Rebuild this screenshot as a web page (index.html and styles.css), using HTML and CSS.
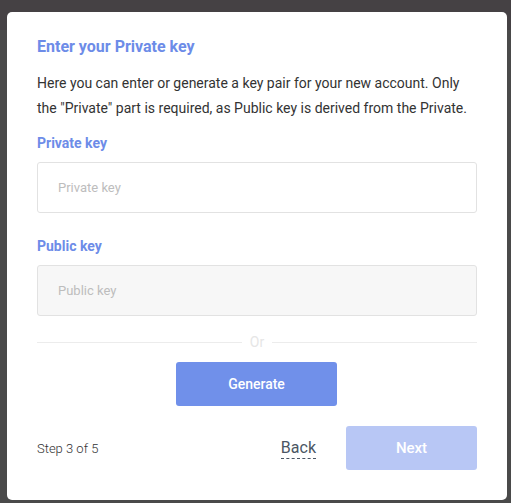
FILE: index.html
```html
<!DOCTYPE html>
<html>
<head>
<meta charset="utf-8">
<link rel="stylesheet" href="styles.css">
</head>
<body>
<div class="backdrop">
  <div class="modal">
    <h1 class="title">Enter your Private key</h1>
    <p class="desc">Here you can enter or generate a key pair for your new account. Only the "Private" part is required, as Public key is derived from the Private.</p>
    <label class="label">Private key</label>
    <input class="field" type="text" placeholder="Private key">
    <label class="label label-second">Public key</label>
    <input class="field field-disabled" type="text" placeholder="Public key" disabled>
    <div class="divider"><span class="divider-line"></span><span class="divider-text">Or</span><span class="divider-line"></span></div>
    <div class="generate-row"><button class="btn btn-generate">Generate</button></div>
    <div class="footer">
      <span class="step">Step 3 of 5</span>
      <div class="actions">
        <a class="back">Back</a>
        <button class="btn btn-next">Next</button>
      </div>
    </div>
  </div>
</div>
</body>
</html>
```
FILE: styles.css
```css
* { box-sizing: border-box; }
html, body { margin: 0; padding: 0; }
body {
  width: 511px;
  height: 503px;
  overflow: hidden;
  font-family: Roboto, "Liberation Sans", sans-serif;
  background: #4a4a4a;
}
.backdrop {
  width: 511px;
  height: 503px;
  padding: 12px 0 0 7px;
  background: linear-gradient(#454144 0, #454144 30px, #4a4a4a 30px);
}
.modal {
  width: 500px;
  height: 488px;
  background: #fff;
  border-radius: 5px;
  padding: 25px 30px 30px 30px;
  display: flex;
  flex-direction: column;
}
.title {
  margin: 0;
  font-size: 16px;
  line-height: 20px;
  font-weight: 700;
  color: #6d8ce8;
}
.desc {
  margin: 14px 0 0 0;
  font-size: 14px;
  line-height: 25px;
  color: #333;
}
.label {
  display: block;
  margin-top: 12px;
  font-size: 14px;
  line-height: 20px;
  font-weight: 700;
  color: #6d8ce8;
}
.label-second { margin-top: 23px; }
.field {
  display: block;
  margin-top: 9px;
  width: 440px;
  height: 51px;
  border: 1px solid #e2e2e2;
  border-radius: 3px;
  padding: 0 20px;
  font-family: Roboto, "Liberation Sans", sans-serif;
  font-size: 13px;
  color: #333;
  background: #fff;
  outline: none;
}
.field::placeholder { color: #bdbdbd; }
.field-disabled { background: #f7f7f7; }
.divider {
  margin-top: 16px;
  height: 20px;
  display: flex;
  align-items: center;
  gap: 8px;
}
.divider-line { flex: 1; height: 1px; background: #ececec; }
.divider-text { font-size: 14px; color: #e6e6e6; line-height: 20px; }
.generate-row {
  margin-top: 10px;
  display: flex;
  justify-content: center;
  padding-right: 1px;
}
.btn {
  border: none;
  border-radius: 3px;
  font-family: Roboto, "Liberation Sans", sans-serif;
  font-weight: 500;
  color: #fff;
  cursor: pointer;
}
.btn-generate {
  width: 161px;
  height: 44px;
  background: #7090ea;
  font-size: 14px;
}
.footer {
  margin-top: 20px;
  display: flex;
  align-items: center;
  justify-content: space-between;
}
.step {
  font-size: 13px;
  font-weight: 300;
  color: #333;
}
.actions {
  display: flex;
  align-items: center;
  gap: 30px;
}
.back {
  font-size: 16px;
  color: #4b5664;
  line-height: 20px;
  border-bottom: 1px dashed #4b5664;
  margin-top: 0;
}
.btn-next {
  width: 131px;
  height: 44px;
  background: #b8c7f5;
  font-size: 15px;
}
```
